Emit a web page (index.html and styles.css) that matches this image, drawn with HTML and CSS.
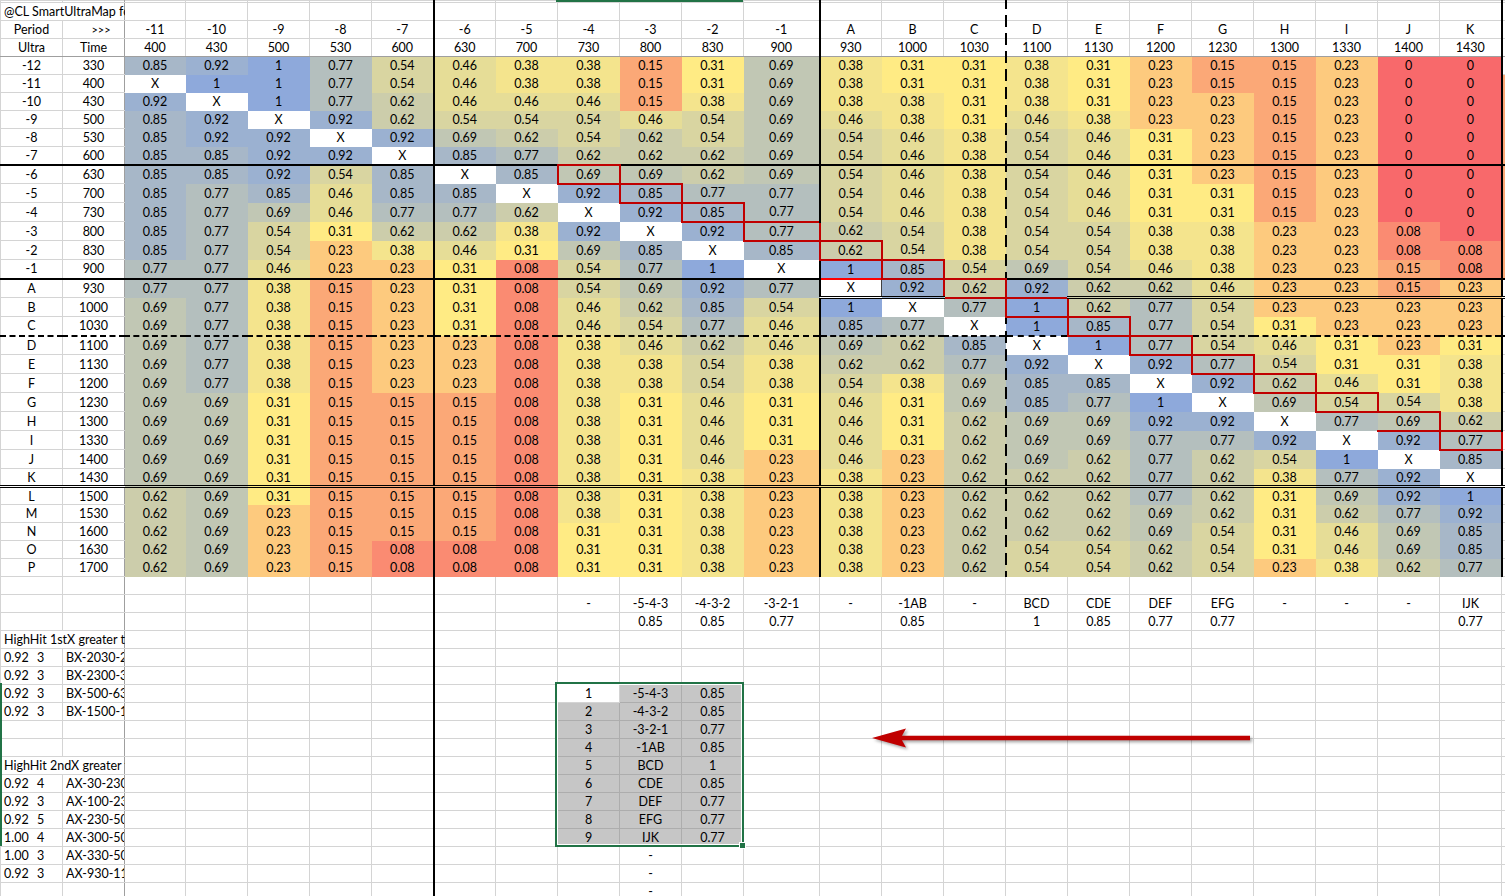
FILE: index.html
```html
<!DOCTYPE html>
<html>
<head>
<meta charset="utf-8">
<title>SmartUltraMap</title>
<link rel="stylesheet" href="styles.css">
</head>
<body>
<div class="canvas">
<table class="sheet">
<colgroup>
<col class="w62"><col class="w62"><col class="w61"><col class="w62"><col class="w62"><col class="w62"><col class="w62"><col class="w62"><col class="w62"><col class="w62"><col class="w62"><col class="w62"><col class="w76"><col class="w62"><col class="w62"><col class="w62"><col class="w62"><col class="w62"><col class="w62"><col class="w62"><col class="w62"><col class="w62"><col class="w62"><col class="w62"><col class="w10">
</colgroup>
<tbody>
<tr class="g r0"><td></td><td></td><td></td><td></td><td></td><td></td><td></td><td></td><td></td><td></td><td></td><td></td><td></td><td></td><td></td><td></td><td></td><td></td><td></td><td></td><td></td><td></td><td></td><td></td><td></td></tr>
<tr class="g"><td class="l nr"><div class="clip w121">@CL SmartUltraMap for Period</div></td><td></td><td></td><td></td><td></td><td></td><td></td><td></td><td></td><td></td><td></td><td></td><td></td><td></td><td></td><td></td><td></td><td></td><td></td><td></td><td></td><td></td><td></td><td></td><td></td></tr>
<tr class="g"><td>Period</td><td class="arr">&gt;&gt;&gt;</td><td>-11</td><td>-10</td><td>-9</td><td>-8</td><td>-7</td><td>-6</td><td>-5</td><td>-4</td><td>-3</td><td>-2</td><td>-1</td><td>A</td><td>B</td><td>C</td><td>D</td><td>E</td><td>F</td><td>G</td><td>H</td><td>I</td><td>J</td><td>K</td><td></td></tr>
<tr class="g hu"><td>Ultra</td><td>Time</td><td>400</td><td>430</td><td>500</td><td>530</td><td>600</td><td>630</td><td>700</td><td>730</td><td>800</td><td>830</td><td>900</td><td>930</td><td>1000</td><td>1030</td><td>1100</td><td>1130</td><td>1200</td><td>1230</td><td>1300</td><td>1330</td><td>1400</td><td>1430</td><td></td></tr>
<tr class="g"><td>-12</td><td>330</td><td class="c85">0.85</td><td class="c92">0.92</td><td class="c1">1</td><td class="c77">0.77</td><td class="c54">0.54</td><td class="c46">0.46</td><td class="c38">0.38</td><td class="c38">0.38</td><td class="c15">0.15</td><td class="c31">0.31</td><td class="c69">0.69</td><td class="c38">0.38</td><td class="c31">0.31</td><td class="c31">0.31</td><td class="c38">0.38</td><td class="c31">0.31</td><td class="c23">0.23</td><td class="c15">0.15</td><td class="c15">0.15</td><td class="c23">0.23</td><td class="c0">0</td><td class="c0">0</td><td></td></tr>
<tr class="g"><td>-11</td><td>400</td><td class="cx">X</td><td class="c1">1</td><td class="c1">1</td><td class="c77">0.77</td><td class="c54">0.54</td><td class="c46">0.46</td><td class="c38">0.38</td><td class="c38">0.38</td><td class="c15">0.15</td><td class="c31">0.31</td><td class="c69">0.69</td><td class="c38">0.38</td><td class="c31">0.31</td><td class="c31">0.31</td><td class="c38">0.38</td><td class="c31">0.31</td><td class="c23">0.23</td><td class="c15">0.15</td><td class="c15">0.15</td><td class="c23">0.23</td><td class="c0">0</td><td class="c0">0</td><td class="c15"></td></tr>
<tr class="g"><td>-10</td><td>430</td><td class="c92">0.92</td><td class="cx">X</td><td class="c1">1</td><td class="c77">0.77</td><td class="c62">0.62</td><td class="c46">0.46</td><td class="c46">0.46</td><td class="c46">0.46</td><td class="c15">0.15</td><td class="c38">0.38</td><td class="c69">0.69</td><td class="c38">0.38</td><td class="c38">0.38</td><td class="c31">0.31</td><td class="c38">0.38</td><td class="c31">0.31</td><td class="c23">0.23</td><td class="c23">0.23</td><td class="c15">0.15</td><td class="c23">0.23</td><td class="c0">0</td><td class="c0">0</td><td class="c15"></td></tr>
<tr class="g"><td>-9</td><td>500</td><td class="c85">0.85</td><td class="c92">0.92</td><td class="cx">X</td><td class="c92">0.92</td><td class="c62">0.62</td><td class="c54">0.54</td><td class="c54">0.54</td><td class="c54">0.54</td><td class="c46">0.46</td><td class="c54">0.54</td><td class="c69">0.69</td><td class="c46">0.46</td><td class="c38">0.38</td><td class="c31">0.31</td><td class="c46">0.46</td><td class="c38">0.38</td><td class="c23">0.23</td><td class="c23">0.23</td><td class="c15">0.15</td><td class="c23">0.23</td><td class="c0">0</td><td class="c0">0</td><td class="c15"></td></tr>
<tr class="g"><td>-8</td><td>530</td><td class="c85">0.85</td><td class="c92">0.92</td><td class="c92">0.92</td><td class="cx">X</td><td class="c92">0.92</td><td class="c69">0.69</td><td class="c62">0.62</td><td class="c54">0.54</td><td class="c62">0.62</td><td class="c54">0.54</td><td class="c69">0.69</td><td class="c54">0.54</td><td class="c46">0.46</td><td class="c38">0.38</td><td class="c54">0.54</td><td class="c46">0.46</td><td class="c31">0.31</td><td class="c23">0.23</td><td class="c15">0.15</td><td class="c23">0.23</td><td class="c0">0</td><td class="c0">0</td><td class="c15"></td></tr>
<tr class="g"><td>-7</td><td>600</td><td class="c85">0.85</td><td class="c85">0.85</td><td class="c92">0.92</td><td class="c92">0.92</td><td class="cx">X</td><td class="c85">0.85</td><td class="c77">0.77</td><td class="c62">0.62</td><td class="c62">0.62</td><td class="c62">0.62</td><td class="c69">0.69</td><td class="c54">0.54</td><td class="c46">0.46</td><td class="c38">0.38</td><td class="c54">0.54</td><td class="c46">0.46</td><td class="c31">0.31</td><td class="c23">0.23</td><td class="c15">0.15</td><td class="c23">0.23</td><td class="c0">0</td><td class="c0">0</td><td class="c15"></td></tr>
<tr class="g h19 t6"><td>-6</td><td>630</td><td class="c85">0.85</td><td class="c85">0.85</td><td class="c92">0.92</td><td class="c54">0.54</td><td class="c85">0.85</td><td class="cx">X</td><td class="c85">0.85</td><td class="c69 rb">0.69</td><td class="c69">0.69</td><td class="c62">0.62</td><td class="c69">0.69</td><td class="c54">0.54</td><td class="c46">0.46</td><td class="c38">0.38</td><td class="c54">0.54</td><td class="c46">0.46</td><td class="c31">0.31</td><td class="c23">0.23</td><td class="c15">0.15</td><td class="c23">0.23</td><td class="c0">0</td><td class="c0">0</td><td class="c15"></td></tr>
<tr class="g h19"><td>-5</td><td>700</td><td class="c85">0.85</td><td class="c77">0.77</td><td class="c85">0.85</td><td class="c46">0.46</td><td class="c85">0.85</td><td class="c85">0.85</td><td class="cx">X</td><td class="c92">0.92</td><td class="c85 rb">0.85</td><td class="c77">0.77</td><td class="c77">0.77</td><td class="c54">0.54</td><td class="c46">0.46</td><td class="c38">0.38</td><td class="c54">0.54</td><td class="c46">0.46</td><td class="c31">0.31</td><td class="c31">0.31</td><td class="c15">0.15</td><td class="c23">0.23</td><td class="c0">0</td><td class="c0">0</td><td class="c15"></td></tr>
<tr class="g h19"><td>-4</td><td>730</td><td class="c85">0.85</td><td class="c77">0.77</td><td class="c69">0.69</td><td class="c46">0.46</td><td class="c77">0.77</td><td class="c77">0.77</td><td class="c62">0.62</td><td class="cx">X</td><td class="c92">0.92</td><td class="c85 rb">0.85</td><td class="c77">0.77</td><td class="c54">0.54</td><td class="c46">0.46</td><td class="c38">0.38</td><td class="c54">0.54</td><td class="c46">0.46</td><td class="c31">0.31</td><td class="c31">0.31</td><td class="c15">0.15</td><td class="c23">0.23</td><td class="c0">0</td><td class="c0">0</td><td class="c15"></td></tr>
<tr class="g h19"><td>-3</td><td>800</td><td class="c85">0.85</td><td class="c77">0.77</td><td class="c54">0.54</td><td class="c31">0.31</td><td class="c62">0.62</td><td class="c62">0.62</td><td class="c38">0.38</td><td class="c92">0.92</td><td class="cx">X</td><td class="c92">0.92</td><td class="c77 rb">0.77</td><td class="c62">0.62</td><td class="c54">0.54</td><td class="c38">0.38</td><td class="c54">0.54</td><td class="c54">0.54</td><td class="c38">0.38</td><td class="c38">0.38</td><td class="c23">0.23</td><td class="c23">0.23</td><td class="c08">0.08</td><td class="c0">0</td><td class="c15"></td></tr>
<tr class="g h19"><td>-2</td><td>830</td><td class="c85">0.85</td><td class="c77">0.77</td><td class="c54">0.54</td><td class="c23">0.23</td><td class="c38">0.38</td><td class="c46">0.46</td><td class="c31">0.31</td><td class="c69">0.69</td><td class="c85">0.85</td><td class="cx">X</td><td class="c85">0.85</td><td class="c62 rb">0.62</td><td class="c54">0.54</td><td class="c38">0.38</td><td class="c54">0.54</td><td class="c54">0.54</td><td class="c38">0.38</td><td class="c38">0.38</td><td class="c23">0.23</td><td class="c23">0.23</td><td class="c08">0.08</td><td class="c08">0.08</td><td class="c15"></td></tr>
<tr class="g h19"><td>-1</td><td>900</td><td class="c77">0.77</td><td class="c77">0.77</td><td class="c46">0.46</td><td class="c23">0.23</td><td class="c23">0.23</td><td class="c31">0.31</td><td class="c08">0.08</td><td class="c54">0.54</td><td class="c77">0.77</td><td class="c1">1</td><td class="cx">X</td><td class="c1">1</td><td class="c85 rb">0.85</td><td class="c54">0.54</td><td class="c69">0.69</td><td class="c54">0.54</td><td class="c46">0.46</td><td class="c38">0.38</td><td class="c23">0.23</td><td class="c23">0.23</td><td class="c15">0.15</td><td class="c08">0.08</td><td class="c15"></td></tr>
<tr class="g h19 tA"><td>A</td><td>930</td><td class="c77">0.77</td><td class="c77">0.77</td><td class="c38">0.38</td><td class="c15">0.15</td><td class="c23">0.23</td><td class="c31">0.31</td><td class="c08">0.08</td><td class="c54">0.54</td><td class="c69">0.69</td><td class="c92">0.92</td><td class="c77">0.77</td><td class="cx aa">X</td><td class="c92 ab">0.92</td><td class="c62 rb">0.62</td><td class="c92">0.92</td><td class="c62">0.62</td><td class="c62">0.62</td><td class="c46">0.46</td><td class="c23">0.23</td><td class="c23">0.23</td><td class="c15">0.15</td><td class="c23">0.23</td><td></td></tr>
<tr class="g h19 tB"><td>B</td><td>1000</td><td class="c69">0.69</td><td class="c77">0.77</td><td class="c38">0.38</td><td class="c15">0.15</td><td class="c23">0.23</td><td class="c31">0.31</td><td class="c08">0.08</td><td class="c46">0.46</td><td class="c62">0.62</td><td class="c85">0.85</td><td class="c54">0.54</td><td class="c1">1</td><td class="cx">X</td><td class="c77 rt">0.77</td><td class="c1 rb">1</td><td class="c62">0.62</td><td class="c77">0.77</td><td class="c54">0.54</td><td class="c23">0.23</td><td class="c23">0.23</td><td class="c23">0.23</td><td class="c23">0.23</td><td></td></tr>
<tr class="g h19"><td>C</td><td>1030</td><td class="c69">0.69</td><td class="c77">0.77</td><td class="c38">0.38</td><td class="c15">0.15</td><td class="c23">0.23</td><td class="c31">0.31</td><td class="c08">0.08</td><td class="c46">0.46</td><td class="c54">0.54</td><td class="c77">0.77</td><td class="c46">0.46</td><td class="c85">0.85</td><td class="c77">0.77</td><td class="cx">X</td><td class="c1">1</td><td class="c85 rb">0.85</td><td class="c77">0.77</td><td class="c54">0.54</td><td class="c31">0.31</td><td class="c23">0.23</td><td class="c23">0.23</td><td class="c23">0.23</td><td></td></tr>
<tr class="g h19 tD"><td>D</td><td>1100</td><td class="c69">0.69</td><td class="c77">0.77</td><td class="c38">0.38</td><td class="c15">0.15</td><td class="c23">0.23</td><td class="c23">0.23</td><td class="c08">0.08</td><td class="c38">0.38</td><td class="c46">0.46</td><td class="c62">0.62</td><td class="c46">0.46</td><td class="c69">0.69</td><td class="c62">0.62</td><td class="c85">0.85</td><td class="cx">X</td><td class="c1">1</td><td class="c77 rb">0.77</td><td class="c54">0.54</td><td class="c46">0.46</td><td class="c31">0.31</td><td class="c23">0.23</td><td class="c31">0.31</td><td></td></tr>
<tr class="g h19"><td>E</td><td>1130</td><td class="c69">0.69</td><td class="c77">0.77</td><td class="c38">0.38</td><td class="c15">0.15</td><td class="c23">0.23</td><td class="c23">0.23</td><td class="c08">0.08</td><td class="c38">0.38</td><td class="c38">0.38</td><td class="c54">0.54</td><td class="c38">0.38</td><td class="c62">0.62</td><td class="c62">0.62</td><td class="c77">0.77</td><td class="c92">0.92</td><td class="cx">X</td><td class="c92">0.92</td><td class="c77 rb">0.77</td><td class="c54">0.54</td><td class="c31">0.31</td><td class="c31">0.31</td><td class="c38">0.38</td><td></td></tr>
<tr class="g h19"><td>F</td><td>1200</td><td class="c69">0.69</td><td class="c77">0.77</td><td class="c38">0.38</td><td class="c15">0.15</td><td class="c23">0.23</td><td class="c23">0.23</td><td class="c08">0.08</td><td class="c38">0.38</td><td class="c38">0.38</td><td class="c54">0.54</td><td class="c38">0.38</td><td class="c54">0.54</td><td class="c38">0.38</td><td class="c69">0.69</td><td class="c85">0.85</td><td class="c85">0.85</td><td class="cx">X</td><td class="c92">0.92</td><td class="c62 rb">0.62</td><td class="c46">0.46</td><td class="c31">0.31</td><td class="c38">0.38</td><td></td></tr>
<tr class="g h19"><td>G</td><td>1230</td><td class="c69">0.69</td><td class="c69">0.69</td><td class="c31">0.31</td><td class="c15">0.15</td><td class="c15">0.15</td><td class="c15">0.15</td><td class="c08">0.08</td><td class="c38">0.38</td><td class="c31">0.31</td><td class="c46">0.46</td><td class="c31">0.31</td><td class="c46">0.46</td><td class="c31">0.31</td><td class="c69">0.69</td><td class="c85">0.85</td><td class="c77">0.77</td><td class="c1">1</td><td class="cx">X</td><td class="c69">0.69</td><td class="c54 rb">0.54</td><td class="c54">0.54</td><td class="c38">0.38</td><td></td></tr>
<tr class="g h19"><td>H</td><td>1300</td><td class="c69">0.69</td><td class="c69">0.69</td><td class="c31">0.31</td><td class="c15">0.15</td><td class="c15">0.15</td><td class="c15">0.15</td><td class="c08">0.08</td><td class="c38">0.38</td><td class="c31">0.31</td><td class="c46">0.46</td><td class="c31">0.31</td><td class="c46">0.46</td><td class="c31">0.31</td><td class="c62">0.62</td><td class="c69">0.69</td><td class="c69">0.69</td><td class="c92">0.92</td><td class="c92">0.92</td><td class="cx">X</td><td class="c77">0.77</td><td class="c69 rb nl">0.69</td><td class="c62">0.62</td><td></td></tr>
<tr class="g h19"><td>I</td><td>1330</td><td class="c69">0.69</td><td class="c69">0.69</td><td class="c31">0.31</td><td class="c15">0.15</td><td class="c15">0.15</td><td class="c15">0.15</td><td class="c08">0.08</td><td class="c38">0.38</td><td class="c31">0.31</td><td class="c46">0.46</td><td class="c31">0.31</td><td class="c46">0.46</td><td class="c31">0.31</td><td class="c62">0.62</td><td class="c69">0.69</td><td class="c69">0.69</td><td class="c77">0.77</td><td class="c77">0.77</td><td class="c92">0.92</td><td class="cx">X</td><td class="c92">0.92</td><td class="c77 rb">0.77</td><td></td></tr>
<tr class="g h19"><td>J</td><td>1400</td><td class="c69">0.69</td><td class="c69">0.69</td><td class="c31">0.31</td><td class="c15">0.15</td><td class="c15">0.15</td><td class="c15">0.15</td><td class="c08">0.08</td><td class="c38">0.38</td><td class="c31">0.31</td><td class="c46">0.46</td><td class="c23">0.23</td><td class="c46">0.46</td><td class="c23">0.23</td><td class="c62">0.62</td><td class="c69">0.69</td><td class="c62">0.62</td><td class="c77">0.77</td><td class="c62">0.62</td><td class="c54">0.54</td><td class="c1">1</td><td class="cx">X</td><td class="c85">0.85</td><td></td></tr>
<tr class="g"><td>K</td><td>1430</td><td class="c69">0.69</td><td class="c69">0.69</td><td class="c31">0.31</td><td class="c15">0.15</td><td class="c15">0.15</td><td class="c15">0.15</td><td class="c08">0.08</td><td class="c38">0.38</td><td class="c31">0.31</td><td class="c38">0.38</td><td class="c23">0.23</td><td class="c38">0.38</td><td class="c23">0.23</td><td class="c62">0.62</td><td class="c62">0.62</td><td class="c62">0.62</td><td class="c77">0.77</td><td class="c62">0.62</td><td class="c38">0.38</td><td class="c77">0.77</td><td class="c92">0.92</td><td class="cx">X</td><td></td></tr>
<tr class="g tL"><td>L</td><td>1500</td><td class="c62">0.62</td><td class="c69">0.69</td><td class="c31">0.31</td><td class="c15">0.15</td><td class="c15">0.15</td><td class="c15">0.15</td><td class="c08">0.08</td><td class="c38">0.38</td><td class="c31">0.31</td><td class="c38">0.38</td><td class="c23">0.23</td><td class="c38">0.38</td><td class="c23">0.23</td><td class="c62">0.62</td><td class="c62">0.62</td><td class="c62">0.62</td><td class="c77">0.77</td><td class="c62">0.62</td><td class="c31">0.31</td><td class="c69">0.69</td><td class="c92">0.92</td><td class="c1">1</td><td></td></tr>
<tr class="g"><td>M</td><td>1530</td><td class="c62">0.62</td><td class="c69">0.69</td><td class="c23">0.23</td><td class="c15">0.15</td><td class="c15">0.15</td><td class="c15">0.15</td><td class="c08">0.08</td><td class="c38">0.38</td><td class="c31">0.31</td><td class="c38">0.38</td><td class="c23">0.23</td><td class="c38">0.38</td><td class="c23">0.23</td><td class="c62">0.62</td><td class="c62">0.62</td><td class="c62">0.62</td><td class="c69">0.69</td><td class="c62">0.62</td><td class="c31">0.31</td><td class="c62">0.62</td><td class="c77">0.77</td><td class="c92">0.92</td><td></td></tr>
<tr class="g"><td>N</td><td>1600</td><td class="c62">0.62</td><td class="c69">0.69</td><td class="c23">0.23</td><td class="c15">0.15</td><td class="c15">0.15</td><td class="c15">0.15</td><td class="c08">0.08</td><td class="c31">0.31</td><td class="c31">0.31</td><td class="c38">0.38</td><td class="c23">0.23</td><td class="c38">0.38</td><td class="c23">0.23</td><td class="c62">0.62</td><td class="c62">0.62</td><td class="c62">0.62</td><td class="c69">0.69</td><td class="c54">0.54</td><td class="c31">0.31</td><td class="c46">0.46</td><td class="c69">0.69</td><td class="c85">0.85</td><td></td></tr>
<tr class="g"><td>O</td><td>1630</td><td class="c62">0.62</td><td class="c69">0.69</td><td class="c23">0.23</td><td class="c15">0.15</td><td class="c08">0.08</td><td class="c08">0.08</td><td class="c08">0.08</td><td class="c31">0.31</td><td class="c31">0.31</td><td class="c38">0.38</td><td class="c23">0.23</td><td class="c38">0.38</td><td class="c23">0.23</td><td class="c62">0.62</td><td class="c54">0.54</td><td class="c54">0.54</td><td class="c62">0.62</td><td class="c54">0.54</td><td class="c31">0.31</td><td class="c46">0.46</td><td class="c69">0.69</td><td class="c85">0.85</td><td></td></tr>
<tr class="g"><td>P</td><td>1700</td><td class="c62">0.62</td><td class="c69">0.69</td><td class="c23">0.23</td><td class="c15">0.15</td><td class="c08">0.08</td><td class="c08">0.08</td><td class="c08">0.08</td><td class="c31">0.31</td><td class="c31">0.31</td><td class="c38">0.38</td><td class="c23">0.23</td><td class="c38">0.38</td><td class="c23">0.23</td><td class="c62">0.62</td><td class="c54">0.54</td><td class="c54">0.54</td><td class="c62">0.62</td><td class="c54">0.54</td><td class="c23">0.23</td><td class="c38">0.38</td><td class="c62">0.62</td><td class="c77">0.77</td><td></td></tr>
<tr><td></td><td></td><td></td><td></td><td></td><td></td><td></td><td></td><td></td><td></td><td></td><td></td><td></td><td></td><td></td><td></td><td></td><td></td><td></td><td></td><td></td><td></td><td></td><td></td><td></td></tr>
<tr><td></td><td></td><td></td><td></td><td></td><td></td><td></td><td></td><td></td><td>-</td><td>-5-4-3</td><td>-4-3-2</td><td>-3-2-1</td><td>-</td><td>-1AB</td><td>-</td><td>BCD</td><td>CDE</td><td>DEF</td><td>EFG</td><td>-</td><td>-</td><td>-</td><td>IJK</td><td></td></tr>
<tr><td></td><td></td><td></td><td></td><td></td><td></td><td></td><td></td><td></td><td></td><td>0.85</td><td>0.85</td><td>0.77</td><td></td><td>0.85</td><td></td><td>1</td><td>0.85</td><td>0.77</td><td>0.77</td><td></td><td></td><td></td><td>0.77</td><td></td></tr>
<tr><td class="l nr"><div class="clip w121">HighHit 1stX greater than 0.9</div></td><td></td><td></td><td></td><td></td><td></td><td></td><td></td><td></td><td></td><td></td><td></td><td></td><td></td><td></td><td></td><td></td><td></td><td></td><td></td><td></td><td></td><td></td><td></td><td></td></tr>
<tr><td class="l"><span class="hv">0.92</span>3</td><td class="l"><div class="clip w58">BX-2030-2130</div></td><td></td><td></td><td></td><td></td><td></td><td></td><td></td><td></td><td></td><td></td><td></td><td></td><td></td><td></td><td></td><td></td><td></td><td></td><td></td><td></td><td></td><td></td><td></td></tr>
<tr><td class="l"><span class="hv">0.92</span>3</td><td class="l"><div class="clip w58">BX-2300-3000</div></td><td></td><td></td><td></td><td></td><td></td><td></td><td></td><td></td><td></td><td></td><td></td><td></td><td></td><td></td><td></td><td></td><td></td><td></td><td></td><td></td><td></td><td></td><td></td></tr>
<tr><td class="l"><span class="hv">0.92</span>3</td><td class="l"><div class="clip w58">BX-500-630</div></td><td></td><td></td><td></td><td></td><td></td><td></td><td></td><td class="sel act">1</td><td class="sel">-5-4-3</td><td class="sel">0.85</td><td></td><td></td><td></td><td></td><td></td><td></td><td></td><td></td><td></td><td></td><td></td><td></td><td></td></tr>
<tr><td class="l"><span class="hv">0.92</span>3</td><td class="l"><div class="clip w58">BX-1500-1600</div></td><td></td><td></td><td></td><td></td><td></td><td></td><td></td><td class="sel">2</td><td class="sel">-4-3-2</td><td class="sel">0.85</td><td></td><td></td><td></td><td></td><td></td><td></td><td></td><td></td><td></td><td></td><td></td><td></td><td></td></tr>
<tr><td></td><td></td><td></td><td></td><td></td><td></td><td></td><td></td><td></td><td class="sel">3</td><td class="sel">-3-2-1</td><td class="sel">0.77</td><td></td><td></td><td></td><td></td><td></td><td></td><td></td><td></td><td></td><td></td><td></td><td></td><td></td></tr>
<tr><td></td><td></td><td></td><td></td><td></td><td></td><td></td><td></td><td></td><td class="sel">4</td><td class="sel">-1AB</td><td class="sel">0.85</td><td></td><td></td><td></td><td></td><td></td><td></td><td></td><td></td><td></td><td></td><td></td><td></td><td></td></tr>
<tr><td class="l nr"><div class="clip w121">HighHit 2ndX greater than 0.9</div></td><td></td><td></td><td></td><td></td><td></td><td></td><td></td><td></td><td class="sel">5</td><td class="sel">BCD</td><td class="sel">1</td><td></td><td></td><td></td><td></td><td></td><td></td><td></td><td></td><td></td><td></td><td></td><td></td><td></td></tr>
<tr><td class="l"><span class="hv">0.92</span>4</td><td class="l"><div class="clip w58">AX-30-230</div></td><td></td><td></td><td></td><td></td><td></td><td></td><td></td><td class="sel">6</td><td class="sel">CDE</td><td class="sel">0.85</td><td></td><td></td><td></td><td></td><td></td><td></td><td></td><td></td><td></td><td></td><td></td><td></td><td></td></tr>
<tr><td class="l"><span class="hv">0.92</span>3</td><td class="l"><div class="clip w58">AX-100-230</div></td><td></td><td></td><td></td><td></td><td></td><td></td><td></td><td class="sel">7</td><td class="sel">DEF</td><td class="sel">0.77</td><td></td><td></td><td></td><td></td><td></td><td></td><td></td><td></td><td></td><td></td><td></td><td></td><td></td></tr>
<tr><td class="l"><span class="hv">0.92</span>5</td><td class="l"><div class="clip w58">AX-230-500</div></td><td></td><td></td><td></td><td></td><td></td><td></td><td></td><td class="sel">8</td><td class="sel">EFG</td><td class="sel">0.77</td><td></td><td></td><td></td><td></td><td></td><td></td><td></td><td></td><td></td><td></td><td></td><td></td><td></td></tr>
<tr><td class="l"><span class="hv">1.00</span>4</td><td class="l"><div class="clip w58">AX-300-500</div></td><td></td><td></td><td></td><td></td><td></td><td></td><td></td><td class="sel">9</td><td class="sel">IJK</td><td class="sel">0.77</td><td></td><td></td><td></td><td></td><td></td><td></td><td></td><td></td><td></td><td></td><td></td><td></td><td></td></tr>
<tr><td class="l"><span class="hv">1.00</span>3</td><td class="l"><div class="clip w58">AX-330-500</div></td><td></td><td></td><td></td><td></td><td></td><td></td><td></td><td></td><td>-</td><td></td><td></td><td></td><td></td><td></td><td></td><td></td><td></td><td></td><td></td><td></td><td></td><td></td><td></td></tr>
<tr><td class="l"><span class="hv">0.92</span>3</td><td class="l"><div class="clip w58">AX-930-1100</div></td><td></td><td></td><td></td><td></td><td></td><td></td><td></td><td></td><td>-</td><td></td><td></td><td></td><td></td><td></td><td></td><td></td><td></td><td></td><td></td><td></td><td></td><td></td><td></td></tr>
<tr><td></td><td></td><td></td><td></td><td></td><td></td><td></td><td></td><td></td><td></td><td>-</td><td></td><td></td><td></td><td></td><td></td><td></td><td></td><td></td><td></td><td></td><td></td><td></td><td></td><td></td></tr>
</tbody>
</table>
<div class="hdr-top"></div>
<div class="hdr-left"></div>
<div class="selbox"><div class="handle"></div></div>
<svg class="arrow" viewBox="0 0 390 30" width="390" height="30">
<path d="M4 14 L38 4.5 L34 11.8 L382 11.8 L382 16.2 L34 16.2 L38 23.5 Z" fill="#c00000"/>
</svg>
</div>
</body>
</html>
```
FILE: styles.css
```css
html, body {
  margin: 0;
  padding: 0;
  background: #fff;
  overflow: hidden;
}

.canvas {
  position: relative;
  width: 1505px;
  height: 896px;
  overflow: hidden;
}

.sheet {
  border-collapse: collapse;
  table-layout: fixed;
  width: 1511px;
  font-family: Lato, "Liberation Sans", Arial, sans-serif;
  font-size: 12.5px;
  color: #000;
}

.sheet col.w62 { width: 62px; }
.sheet col.w61 { width: 61px; }
.sheet col.w76 { width: 76px; }
.sheet col.w10 { width: 10px; }

.sheet tr { height: 18px; }
.sheet tr.r0 { height: 2px; }
.sheet tr.h19 { height: 19px; }

.sheet td {
  border: 1px solid #d4d4d4;
  padding: 1px 2px 0;
  text-align: center;
  vertical-align: middle;
  white-space: nowrap;
  line-height: 14px;
}

.sheet tr.r0 td { padding: 0; }

.sheet td.l { text-align: left; padding-left: 3px; }
.sheet td.arr { padding-left: 17px; font-size: 11px; }
.sheet td.nr { border-right-color: #fff; }

.clip { overflow: hidden; white-space: nowrap; }
.w121 { width: 121px; }
.w58 { width: 58px; }
.hv { display: inline-block; width: 33px; }

/* conditional-format colour scale */
.sheet td.c0  { background: #f8696b; border-color: #f8696b; }
.sheet td.c08 { background: #fa8b72; border-color: #fa8b72; }
.sheet td.c15 { background: #fba877; border-color: #fba877; }
.sheet td.c23 { background: #fdca7e; border-color: #fdca7e; }
.sheet td.c31 { background: #ffeb84; border-color: #ffeb84; }
.sheet td.c38 { background: #f4e48d; border-color: #f4e48d; }
.sheet td.c46 { background: #e6dd97; border-color: #e6dd97; }
.sheet td.c54 { background: #d9d5a1; border-color: #d9d5a1; }
.sheet td.c62 { background: #cccdab; border-color: #cccdab; }
.sheet td.c69 { background: #c1c7b4; border-color: #c1c7b4; }
.sheet td.c77 { background: #b4bfbe; border-color: #b4bfbe; }
.sheet td.c85 { background: #a7b7c8; border-color: #a7b7c8; }
.sheet td.c92 { background: #9bb1d1; border-color: #9bb1d1; }
.sheet td.c1  { background: #8ea9db; border-color: #8ea9db; }
.sheet td.cx  { background: #fff; border-color: #fff; }

/* freeze panes */
.sheet td:nth-child(2) { border-right: 1px solid #9f9f9f; }
.sheet tr.hu td { border-bottom: 1px solid #9f9f9f; }

/* section lines */
.sheet td:nth-child(8) { border-left: 2px solid #000; }
.sheet tr.g td:nth-child(14) { border-left: 2px solid #000; }
.sheet tr.g td:nth-child(17) { border-left: 2px dashed #000; }
.sheet tr.g td:nth-child(24) { border-right: 2px solid #000; }

.sheet tr.t6, .sheet tr.tA { border-top: 2px solid #000; }
.sheet tr.tD { border-top: 2px dashed #000; }
.sheet tr.tL { border-top: 3px double #000; }
.sheet tr.tB td:nth-child(n+14) { border-top: 3px double #000; }

.sheet tr.g td.aa { border-top: 2px solid #ff0000; border-right: 1px solid #404040; }
.sheet tr.g td.ab { border-right: 1px solid #404040; }

/* red staircase */
.sheet tr.g td.rb { border: 2px solid #c00000; }
.sheet tr.g td.rt { border-top: 2px solid #c00000; }
.sheet tr.g td.rb.nl { border-left: 1px solid #c1c7b4; }

/* selection */
.sheet td.sel { background: #c6c6c6; border-color: #adadad; }
.sheet td.act { background: #fff; border-color: #d4d4d4; }

.hdr-top {
  position: absolute;
  left: 556px;
  top: 0;
  width: 187px;
  height: 2px;
  background: #217346;
}

.hdr-left {
  position: absolute;
  left: 0;
  top: 683px;
  width: 2px;
  height: 163px;
  background: #217346;
}

.selbox {
  position: absolute;
  left: 555px;
  top: 682px;
  width: 189px;
  height: 165px;
  box-sizing: border-box;
  border: 2px solid #217346;
  box-shadow: inset 0 0 0 1px #fff;
}

.handle {
  position: absolute;
  right: -4px;
  bottom: -4px;
  width: 5px;
  height: 5px;
  background: #217346;
  border: 1px solid #fff;
}

.arrow {
  position: absolute;
  left: 868px;
  top: 724px;
  filter: drop-shadow(2px 2px 1.5px rgba(0, 0, 0, 0.35));
}
```
